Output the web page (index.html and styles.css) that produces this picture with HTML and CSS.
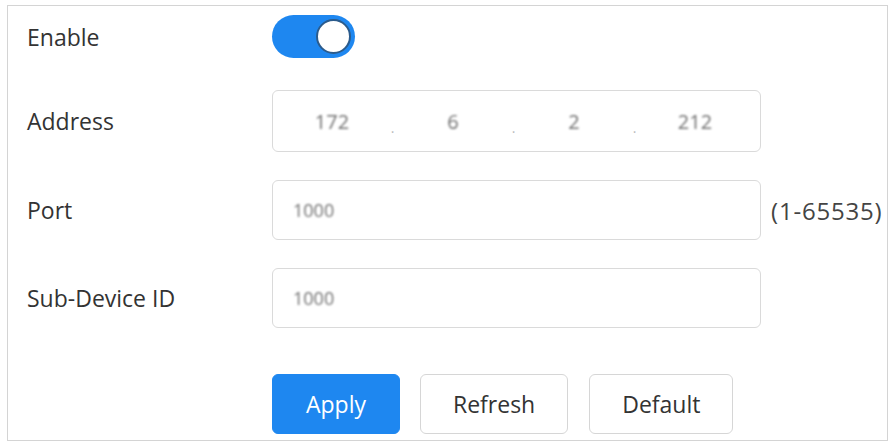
FILE: index.html
```html
<!DOCTYPE html>
<html lang="en">
<head>
    <meta charset="UTF-8">
    <meta name="viewport" content="width=device-width, initial-scale=1.0">
    <title>Register</title>
    <link rel="stylesheet" href="styles.css">
</head>
<body>
    <div class="panel">
        <form class="form">
            <div class="field field-enable">
                <label class="label">Enable</label>
                <div class="switch is-on"><span class="knob"></span></div>
            </div>
            <div class="field field-ip">
                <label class="label">Address</label>
                <div class="input ip-input">
                    <span class="octet">172</span><span class="dot">.</span>
                    <span class="octet">6</span><span class="dot">.</span>
                    <span class="octet">2</span><span class="dot">.</span>
                    <span class="octet">212</span>
                </div>
            </div>
            <div class="field">
                <label class="label">Port</label>
                <div class="input"><span class="value">1000</span></div>
                <span class="hint">(1-65535)</span>
            </div>
            <div class="field">
                <label class="label">Sub-Device ID</label>
                <div class="input"><span class="value">1000</span></div>
            </div>
            <div class="field actions">
                <span class="label"></span>
                <button type="button" class="btn btn-primary">Apply</button>
                <button type="button" class="btn">Refresh</button>
                <button type="button" class="btn">Default</button>
            </div>
        </form>
    </div>
</body>
</html>
```

FILE: styles.css
```css
body, html {
    margin: 0;
    height: 100%;
    background: #fff;
    font-family: 'Open Sans', 'Noto Sans', sans-serif;
    color: #333;
}

.panel {
    box-sizing: border-box;
    width: 881px;
    height: 436px;
    margin: 5px 0 0 7px;
    border: 1px solid #d4d4d4;
    padding: 9px 0 0 19px;
}

.form {
    display: flex;
    flex-direction: column;
    gap: 28px;
}

.field {
    display: flex;
    align-items: center;
    height: 60px;
}

.field-enable {
    height: 43px;
    margin-bottom: 4px;
}

.field-ip {
    height: 62px;
}

.label {
    width: 245px;
    flex-shrink: 0;
    font-size: 23px;
}

/* toggle */
.switch {
    position: relative;
    box-sizing: border-box;
    width: 83px;
    height: 43px;
    border-radius: 22px;
    background: #ccc;
}
.switch.is-on {
    background: #1e87f0;
}
.knob {
    position: absolute;
    top: 4px;
    right: 4px;
    box-sizing: border-box;
    width: 35px;
    height: 35px;
    border-radius: 50%;
    background: #fff;
    border: 2px solid #2b5b8c;
}

/* text boxes */
.input {
    box-sizing: border-box;
    display: flex;
    align-items: center;
    width: 489px;
    height: 100%;
    padding: 0 20px;
    border: 1px solid #dadada;
    border-radius: 6px;
    font-size: 18px;
    color: #707070;
}

.value, .octet {
    filter: blur(1.2px);
}

.ip-input {
    padding: 0 19px;
    font-size: 20px;
}
.octet {
    width: 80px;
    text-align: center;
}
.dot {
    width: 41px;
    padding-top: 12px;
    font-size: 14px;
    text-align: center;
    color: #bbb;
}

.hint {
    margin-left: 10px;
    font-size: 24px;
    letter-spacing: 0.8px;
    color: #444;
}

/* buttons */
.actions {
    margin-top: 18px;
}
.btn {
    box-sizing: border-box;
    height: 60px;
    margin-right: 21px;
    padding: 0 32px;
    border: 1px solid #d6d6d6;
    border-radius: 6px;
    background: #fff;
    font-family: inherit;
    font-size: 23px;
    color: #333;
}
.btn-primary {
    width: 128px;
    margin-right: 20px;
    border-color: #1e87f0;
    background: #1e87f0;
    color: #fff;
}
```
